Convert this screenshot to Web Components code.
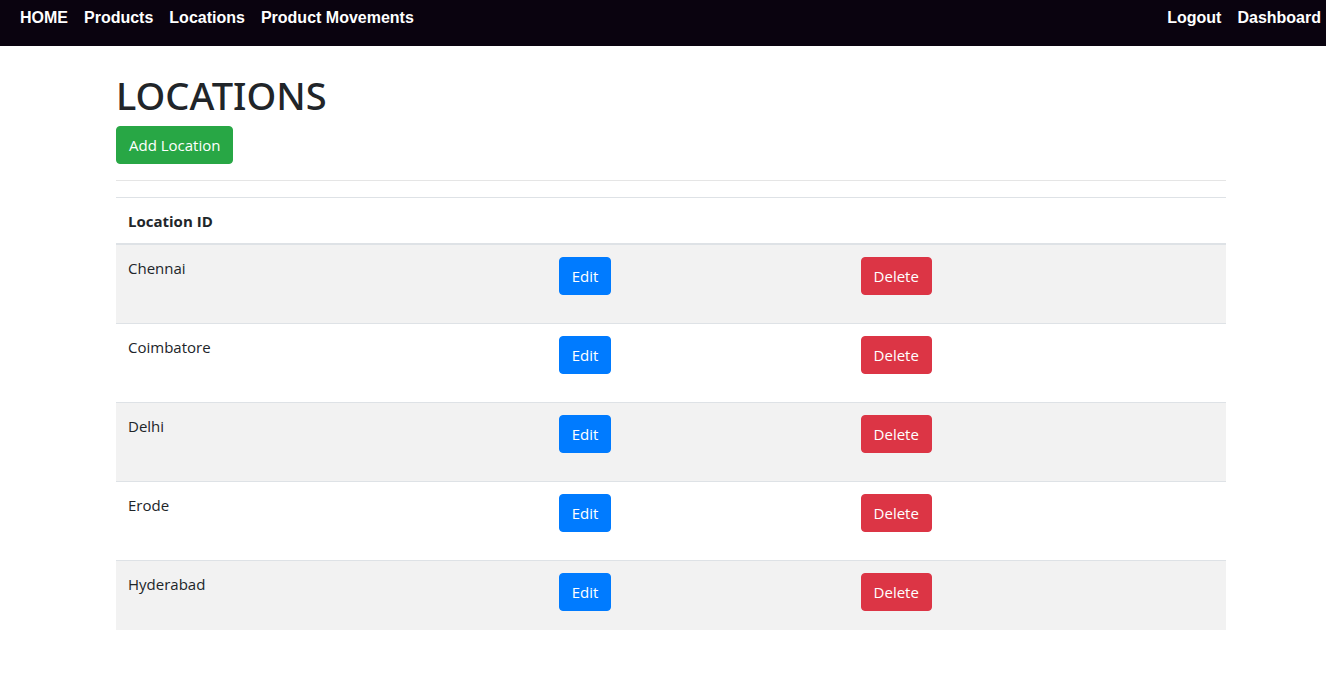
<!DOCTYPE html>
<html lang="en">
<head>
<meta charset="utf-8">
<meta name="viewport" content="width=device-width, initial-scale=1">
<title>Locations</title>
<style>
  body {
    margin: 0;
    background: #fff;
    color: #212529;
    font: 400 15px/24px "Open Sans", "Noto Sans", sans-serif;
  }
</style>
</head>
<body>
<site-nav>
  <nav-link href="#home">HOME</nav-link>
  <nav-link href="#products">Products</nav-link>
  <nav-link href="#locations">Locations</nav-link>
  <nav-link href="#movements">Product Movements</nav-link>
  <nav-link slot="account" href="#logout">Logout</nav-link>
  <nav-link slot="account" href="#dashboard">Dashboard</nav-link>
</site-nav>
<page-container>
  <page-heading>LOCATIONS</page-heading>
  <action-button variant="success">Add Location</action-button>
  <section-rule></section-rule>
  <location-table locations="Chennai,Coimbatore,Delhi,Erode,Hyderabad"></location-table>
</page-container>

<script>
  class BaseElement extends HTMLElement {
    constructor() {
      super();
      this.attachShadow({ mode: "open" }).innerHTML = this.constructor.markup;
    }
  }

  customElements.define("site-nav", class extends BaseElement {
    static markup = `
      <style>
        :host { display: block; background: #0a030f; }
        nav {
          display: flex; flex-wrap: wrap; justify-content: space-between; gap: 16px;
          box-sizing: border-box; min-height: 46px; padding: 6px 5px 6px 20px;
          font: 700 16px/24px "Liberation Sans", Arial, sans-serif;
        }
        div { display: flex; flex-wrap: wrap; gap: 0 16px; }
      </style>
      <nav aria-label="Main">
        <div><slot></slot></div>
        <div><slot name="account"></slot></div>
      </nav>`;
  });

  customElements.define("nav-link", class extends BaseElement {
    static markup = `
      <style>
        :host { display: block; }
        a { color: #fff; text-decoration: none; }
        a:hover { text-decoration: underline; }
      </style>
      <a><slot></slot></a>`;
    connectedCallback() {
      this.shadowRoot.querySelector("a").href = this.getAttribute("href");
    }
  });

  customElements.define("page-container", class extends BaseElement {
    static markup = `
      <style>
        :host { display: block; padding: 26px 0 16px 16px; }
        main { box-sizing: border-box; max-width: 1140px; margin: 0 auto; padding: 0 15px; }
      </style>
      <main><slot></slot></main>`;
  });

  customElements.define("page-heading", class extends BaseElement {
    static markup = `
      <style>
        :host { display: block; margin-bottom: 8px; }
        h1 { margin: 0; font: 500 38px/46px "Noto Sans", "Open Sans", sans-serif; }
      </style>
      <h1><slot></slot></h1>`;
  });

  customElements.define("action-button", class extends BaseElement {
    static markup = `
      <style>
        :host { display: block; width: fit-content; }
        button {
          display: block; padding: 6px 12px; border: 1px solid var(--fill); border-radius: 4px;
          background: var(--fill); color: #fff; font: inherit; line-height: 24px; cursor: pointer;
        }
        button:hover { filter: brightness(0.9); }
        :host([variant="success"]) { --fill: #28a745; }
        :host([variant="primary"]) { --fill: #007bff; }
        :host([variant="danger"]) { --fill: #dc3545; }
      </style>
      <button type="button"><slot></slot></button>`;
  });

  customElements.define("section-rule", class extends BaseElement {
    static markup = `
      <style>
        :host { display: block; padding: 16px 0; }
        hr { margin: 0; border: 0; border-top: 1px solid rgba(0, 0, 0, 0.1); }
      </style>
      <hr>`;
  });

  customElements.define("location-table", class extends BaseElement {
    static markup = `
      <style>
        :host { display: block; }
        table { width: 100%; table-layout: fixed; border-spacing: 0; line-height: 22px; }
        .name { width: 38.8%; }
        .edit { width: 27.2%; }
        th, td { padding: 12px; border-top: 1px solid #dee2e6; text-align: left; vertical-align: top; }
        th { padding-bottom: 11px; border-bottom: 2px solid #dee2e6; font-weight: 700; }
        td { padding-bottom: 28px; }
        tbody tr:first-child td { border-top: 0; }
        tbody tr:last-child td { padding-bottom: 19px; }
        tbody tr:nth-child(odd) { background: #f2f2f2; }
      </style>
      <table>
        <colgroup><col class="name"><col class="edit"><col></colgroup>
        <thead><tr><th scope="col">Location ID</th><th></th><th></th></tr></thead>
        <tbody></tbody>
      </table>`;
    connectedCallback() {
      const rows = this.getAttribute("locations").split(",").map((name) => `
        <tr>
          <td>${name}</td>
          <td><action-button variant="primary">Edit</action-button></td>
          <td><action-button variant="danger">Delete</action-button></td>
        </tr>`);
      this.shadowRoot.querySelector("tbody").innerHTML = rows.join("");
    }
  });
</script>
</body>
</html>
